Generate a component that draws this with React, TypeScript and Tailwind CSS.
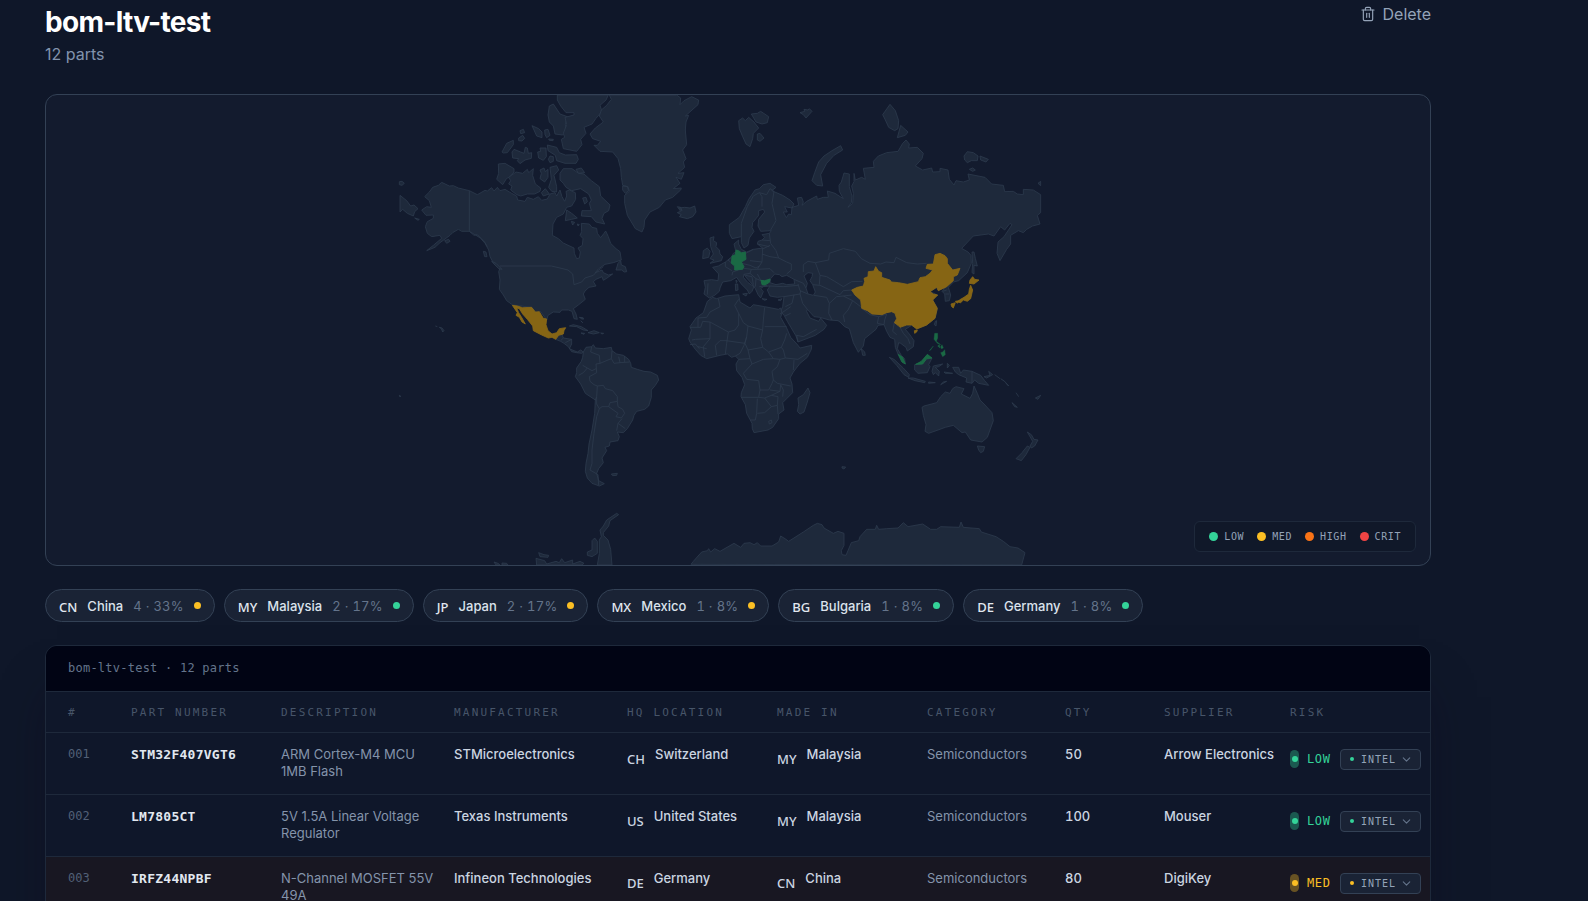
import clsx from "clsx";
import { ChevronDown, Trash2 } from "lucide-react";

type Risk = "LOW" | "MED" | "HIGH" | "CRIT";

interface Country {
  code: string;
  name: string;
  count: number;
  share: number;
  risk: Risk;
}

interface Part {
  id: string;
  partNumber: string;
  description: string;
  manufacturer: string;
  hq: [string, string];
  madeIn: [string, string];
  category: string;
  qty: number;
  supplier: string;
  risk: Risk;
}

const DOT: Record<Risk, string> = {
  LOW: "bg-[#34d399]",
  MED: "bg-[#fbbf24]",
  HIGH: "bg-[#f97316]",
  CRIT: "bg-[#ef4444]",
};

const HALO: Record<Risk, string> = {
  LOW: "bg-[#34d399]/35",
  MED: "bg-[#fbbf24]/35",
  HIGH: "bg-[#f97316]/35",
  CRIT: "bg-[#ef4444]/35",
};

const RISK_TEXT: Record<Risk, string> = {
  LOW: "text-[#34d399]",
  MED: "text-[#fbbf24]",
  HIGH: "text-[#f97316]",
  CRIT: "text-[#ef4444]",
};

const LEVELS: Risk[] = ["LOW", "MED", "HIGH", "CRIT"];

const COUNTRIES: Country[] = [
  { code: "CN", name: "China", count: 4, share: 33, risk: "MED" },
  { code: "MY", name: "Malaysia", count: 2, share: 17, risk: "LOW" },
  { code: "JP", name: "Japan", count: 2, share: 17, risk: "MED" },
  { code: "MX", name: "Mexico", count: 1, share: 8, risk: "MED" },
  { code: "BG", name: "Bulgaria", count: 1, share: 8, risk: "LOW" },
  { code: "DE", name: "Germany", count: 1, share: 8, risk: "LOW" },
];

const PARTS: Part[] = [
  {
    id: "001",
    partNumber: "STM32F407VGT6",
    description: "ARM Cortex-M4 MCU 1MB Flash",
    manufacturer: "STMicroelectronics",
    hq: ["CH", "Switzerland"],
    madeIn: ["MY", "Malaysia"],
    category: "Semiconductors",
    qty: 50,
    supplier: "Arrow Electronics",
    risk: "LOW",
  },
  {
    id: "002",
    partNumber: "LM7805CT",
    description: "5V 1.5A Linear Voltage Regulator",
    manufacturer: "Texas Instruments",
    hq: ["US", "United States"],
    madeIn: ["MY", "Malaysia"],
    category: "Semiconductors",
    qty: 100,
    supplier: "Mouser",
    risk: "LOW",
  },
  {
    id: "003",
    partNumber: "IRFZ44NPBF",
    description: "N-Channel MOSFET 55V 49A",
    manufacturer: "Infineon Technologies",
    hq: ["DE", "Germany"],
    madeIn: ["CN", "China"],
    category: "Semiconductors",
    qty: 80,
    supplier: "DigiKey",
    risk: "MED",
  },
];

const COLUMNS = [
  { label: "#", width: "w-[85px]" },
  { label: "Part number", width: "w-[150px]" },
  { label: "Description", width: "w-[173px]" },
  { label: "Manufacturer", width: "w-[173px]" },
  { label: "HQ location", width: "w-[150px]" },
  { label: "Made in", width: "w-[150px]" },
  { label: "Category", width: "w-[138px]" },
  { label: "Qty", width: "w-[99px]" },
  { label: "Supplier", width: "w-[126px]" },
  { label: "Risk", width: "" },
];

// Map shapes, grouped by region so each group keeps its own origin.
const NORTH_AMERICA = [
  // mainland
  "M104 320L118 306L128 292L145 286L155 277L178 288L190 287L205 294L238 302L262 314L285 301L292 303L305 293L312 303L322 292L330 302L345 298L365 310L380 318L383 330L405 334L412 322L430 328L445 320L455 331L472 327L480 312L495 308L500 318L510 300L516 320L524 334L530 318L528 304L538 300L556 308L557 328L545 348L530 352L520 372L500 382L489 402L487 436L505 446L520 459L552 474L553 490L560 506L568 504L571 486L564 474L577 466L579 446L570 436L575 425L574 400L598 402L606 412L620 415L622 430L632 443L642 430L647 423L655 440L662 460L678 476L690 485L694 510L670 518L645 523L625 537L616 548L636 540L640 548L655 555L668 552L650 565L640 571L636 560L618 568L610 575L618 588L597 592L585 603L580 612L586 628L565 645L550 656L558 672L562 688L552 686L546 664L535 660L515 660L510 667L490 666L474 676L470 690L452 665L438 668L425 652L368 645L350 632L340 615L328 598L330 570L326 545L330 535L312 522L300 500L296 480L285 460L272 445L258 436L238 424L215 424L205 418L188 428L180 436L150 458L135 472L110 482L130 466L155 445L150 436L125 440L112 430L106 410L112 395L130 385L130 375L108 376L95 360L110 350L124 352L118 332Z",
  // aleutians, hawaii, vancouver
  "M30 316L50 332L62 348L72 345L84 356L74 365L70 378L52 370L38 358L30 366Z",
  "M28 275L36 274L43 280L36 286L28 284Z",
  "M74 384L88 388L84 391Z",
  "M164 452L176 448L180 454L170 460Z",
  "M280 484L288 486L291 500L284 500Z",
  "M305 514L318 520L336 538L326 536Z",
  "M136 708L142 710M148 712L156 714L162 722L158 726L154 716Z",
  // newfoundland, anticosti
  "M678 540L684 520L692 512L694 525L706 530L710 545L703 546L695 540Z",
  // canadian arctic
  "M325 222L345 220L372 236L372 246L358 262L350 265L338 284L320 268L326 250Z",
  "M356 262L378 246L398 250L412 238L416 248L430 236L428 256L436 282L452 294L450 304L434 312L412 312L392 318L380 314L362 300L366 288L356 282L362 272Z",
  "M336 186L350 160L370 151L370 164L352 188L340 189Z",
  "M366 186L372 178L392 186L402 190L406 172L412 174L415 190L425 188L424 205L405 210L390 221L382 212L386 206L368 204Z",
  "M390 122L400 118L404 128L392 131Z",
  "M386 144L398 136L404 145L396 153L386 152Z",
  "M426 107L446 116L456 126L456 143L440 138Z",
  "M464 120L474 118L480 136L470 143L465 134Z",
  "M476 147L490 148L489 152L478 151Z",
  "M443 186L452 184L450 174L468 174L469 200L460 211L446 204Z",
  "M475 208L480 198L490 200L490 214L480 218Z",
  "M472 165L500 172L508 188L526 195L560 194L565 208L558 220L525 220L500 212L496 196L474 182Z",
  "M450 240L462 234L466 245L474 238L474 262L464 276L450 266L454 250Z",
  "M480 232L500 227L506 240L492 256L500 290L500 306L485 304L476 292L484 268Z",
  "M454 308L466 296L478 312L460 318Z",
  "M478 48L490 42L502 60L510 72L532 80L526 104L530 122L518 135L495 132L490 108L478 96L474 75Z",
  "M502 15L502 30L512 48L528 68L552 68L552 75L525 82L530 104L520 130L524 142L514 148L520 176L560 184L576 164L572 148L588 130L582 112L606 102L618 85L636 64L630 46L648 30L655 15Z",
  "M510 250L520 236L546 236L566 250L582 252L604 272L628 290L632 318L660 345L656 362L642 370L636 385L644 402L618 396L604 380L574 378L576 362L604 362L598 340L604 330L596 312L572 296L545 302L528 292L520 280L510 270Z",
  "M558 238L574 234L584 248L566 250Z",
  "M578 324L588 322L592 335L584 342Z",
  "M530 360L545 370L562 384L545 388L526 392Z",
  "M544 394L554 397L548 405ZM562 402L568 404L564 408Z",
  // greenland
  "M658 15L664 28L650 46L634 60L628 78L640 96L616 114L600 132L608 146L632 154L622 166L612 166L630 184L668 186L684 206L692 236L694 262L698 286L714 290L718 304L704 316L704 340L712 376L724 396L736 416L756 426L762 412L764 390L780 366L808 352L826 330L848 322L872 300L874 294L850 296L870 280L858 262L874 268L882 248L864 250L884 232L880 216L888 206L878 180L890 164L886 120L888 96L896 76L886 78L924 44L926 30L905 20L882 32L870 44L872 24L860 15Z",
  "M698 288L712 290L716 302L706 310L698 300Z",
  // iceland
  "M862 350L872 352L876 362L868 354L884 352L900 354L914 348L918 366L908 380L892 386L868 380L874 374L862 368L872 364Z",
  // bahamas
  "M568 682L580 684L580 688ZM574 694L578 698",
];

const SOUTH_AMERICA = [
  "M497 118L510 98L516 104L520 114L545 118L545 132L538 146L552 152L562 156L572 150L580 156L575 160L560 158L545 155L535 140L522 130L512 124Z",
  "M580 156L588 142L605 140L610 134L616 144L640 146L664 142L666 152L680 162L700 166L716 178L722 190L724 202L742 208L762 214L782 216L802 226L806 240L796 256L784 270L784 292L776 318L764 328L740 334L732 346L728 360L712 386L700 398L682 396L688 410L684 422L660 426L658 438L645 442L650 452L636 474L640 488L626 506L620 520L626 542L643 551L628 558L606 550L592 534L586 514L588 490L594 460L597 432L606 390L614 340L616 300L586 280L572 252L556 230L560 218L560 204L574 184L578 172Z",
  "M538 78L550 74L574 80L594 92L580 90L560 80Z",
  "M594 98L612 92L628 98L610 102ZM573 99L584 100L582 103ZM632 99L641 100L636 102Z",
  "M570 52L580 54L576 58ZM572 62L578 68",
  "M664 522L682 520L680 526L668 527Z",
  "M28 286L32 288L30 291Z",
  // antarctic peninsula
  "M622 795L628 760L628 720L634 710L630 690L640 678L650 660L680 640L686 644L660 662L656 678L640 698L640 706L654 720L662 748L666 795Z",
  "M592 756L606 750L606 722L614 714L622 724L622 760L606 770L592 766Z",
  "M438 775L464 782L470 792L498 784L508 788L515 776L524 788L548 780L548 792L570 784L582 790L576 795L440 795Z",
  "M446 758L462 764L476 766L474 772L450 770ZM312 786L324 790L330 795L318 795ZM336 789L350 790L354 795L336 795Z",
];

const EURASIA = [
  // mainland
  "M255 300L268 296L280 284L300 280L318 292L305 302L338 316L360 330L372 342L366 354L344 350L352 366L340 366L349 383L356 372L364 374L366 352L386 346L382 324L395 322L400 336L396 346L410 334L440 318L442 328L460 322L475 322L472 303L495 310L520 326L508 304L507 286L514 276L522 249L538 252L538 290L546 318L544 338L534 352L548 340L550 310L545 288L552 275L552 250L556 270L575 262L586 268L580 235L612 232L610 214L625 198L650 188L684 184L698 160L708 150L718 162L716 174L742 172L760 190L756 206L736 228L758 240L785 234L788 246L810 245L810 235L834 240L838 268L852 285L858 272L880 276L898 270L894 252L945 262L965 282L1000 286L1004 305L1030 304L1042 312L1060 314L1060 298L1090 300L1112 314L1112 368L1102 376L1110 402L1088 408L1070 418L1060 428L1045 422L1022 436L1022 462L1010 478L990 512L981 490L984 456L1002 440L1026 404L1020 400L1004 420L992 410L972 438L955 432L910 438L875 475L894 486L903 496L904 520L892 548L866 572L850 576L835 592L842 615L838 632L826 634L824 612L816 604L828 590L805 602L800 592L780 605L803 615L788 630L802 655L795 685L770 705L742 716L725 706L706 718L718 732L732 752L730 770L712 783L708 772L692 760L686 758L682 776L694 796L704 806L706 822L696 816L685 795L676 772L674 748L660 742L650 724L642 704L624 706L618 718L584 746L580 768L565 787L550 758L538 716L524 710L510 696L504 692L478 690L450 682L432 680L412 658L410 664L420 684L446 694L452 684L470 706L462 718L436 736L384 756L378 738L352 694L340 672L330 668L338 650L342 620L322 622L300 618L292 600L300 588L280 590L272 596L280 605L272 624L264 614L256 596L248 584L230 564L222 553L220 562L234 578L252 590L246 604L238 612L232 600L214 582L200 562L182 572L158 576L150 594L148 604L134 616L118 624L102 612L106 592L102 572L125 569L144 572L146 552L128 532L145 528L166 516L184 502L190 490L198 486L192 462L206 450L206 462L214 478L230 486L250 478L278 474L262 462L264 454L276 450L284 442L276 434L298 430L304 422L272 424L264 408L266 388L284 366L280 358L266 362L266 376L248 398L246 412L252 424L238 444L234 466L222 474L214 458L214 440L186 446L178 430L178 404L208 382L226 350L236 328Z",
  // british isles
  "M120 444L132 440L130 452L140 458L138 470L148 480L150 492L158 500L154 512L120 520L132 510L120 506L130 492L122 470Z",
  "M100 482L112 474L120 484L116 502L98 506Z",
  // arctic islands
  "M206 92L218 84L226 92L236 82L252 96L266 114L250 130L248 146L240 170L228 162L218 140L208 116Z",
  "M244 72L262 70L272 64L296 80L292 98L276 102L258 96Z",
  "M262 132L270 130L282 144L270 154L262 150Z",
  "M390 68L404 64L402 58L414 60L418 56L426 64L408 84L400 74Z",
  "M426 272L434 248L446 216L462 198L486 182L512 167L518 180L492 196L470 220L452 254L458 288L440 286Z",
  "M638 74L660 43L676 62L686 92L684 116L674 122L656 112L646 90Z",
  "M692 106L714 126L706 136L682 143Z",
  "M882 198L892 185L910 188L924 198L922 212L904 212L892 218L884 210Z",
  "M930 198L955 208L948 216L932 210ZM898 238L908 234L916 240L908 244Z",
  "M1104 280L1112 274L1112 287Z",
  // sakhalin, taiwan, mediterranean islands
  "M906 486L912 486L916 505L922 528L912 526L912 552L906 548L908 520Z",
  "M796 694L800 692L798 708L793 704Z",
  "M196 582L203 582L204 600L197 602ZM198 570L201 574L199 578ZM218 612L232 610L228 618ZM276 626L291 628L284 631ZM324 630L336 626L332 632Z",
];

const SOUTH = [
  // africa
  "M128 202L140 206L165 198L206 194L210 216L240 234L250 224L284 230L325 238L332 234L336 250L332 262L350 294L362 322L384 346L390 354L425 346L424 358L412 382L390 400L370 426L360 444L366 462L368 488L350 506L338 518L342 540L326 552L326 566L308 592L294 600L252 608L247 596L246 580L230 550L226 524L213 500L214 488L224 464L216 442L200 422L198 402L206 388L196 378L185 382L172 372L150 376L110 386L92 376L76 358L60 336L56 326L64 300L60 290L78 264L100 248L112 214Z",
  "M414 474L420 488L412 516L402 546L390 552L382 544L386 524L384 504L400 494Z",
  "M574 356L584 366L586 376L578 376Z",
  // indonesia
  "M658 382L672 388L700 414L718 434L716 442L702 434L680 406Z",
  "M714 444L730 444L766 454L764 458L735 452Z",
  "M734 404L738 403L755 404L770 388L786 384L776 404L780 410L772 428L744 430L734 420Z",
  "M790 408L818 402L806 410L796 412L808 424L806 438L796 428L790 434L786 424Z",
  "M776 456L796 458L776 460ZM812 464L830 454L820 456ZM832 400L838 406L832 414ZM822 426L848 430L826 430Z",
  "M848 412L866 412L872 430L880 420L906 424L932 436L944 452L956 466L926 460L914 450L906 460L888 456L890 444L866 434L856 426Z",
  "M942 440L960 436L956 424L968 434L950 444ZM974 434L990 446M992 446L1004 454L1016 468L1008 460M1038 488L1046 500M1026 518L1042 532L1034 530Z",
  "M1096 504L1112 496L1104 508Z",
  // australia
  "M756 532L762 528L800 518L812 500L826 486L840 490L848 476L858 470L882 476L874 492L900 505L908 490L912 468L922 490L930 510L942 522L966 548L970 572L952 622L936 636L902 630L886 606L876 608L850 586L826 592L804 600L776 610L765 604L768 584L760 556Z",
  "M922 648L944 650L940 664L932 668L926 660Z",
  "M1072 606L1084 614L1092 628L1104 630L1094 648L1084 654L1080 648L1088 634Z",
  "M1072 648L1080 652L1068 674L1054 692L1038 686L1056 668Z",
  "M516 710L527 711L522 717L516 714Z",
  // antarctica
  "M63 1003L70 994L95 966L112 962L116 956L122 966L134 956L150 964L192 940L212 952L222 940L240 938L252 944L262 938L272 948L306 948L326 936L332 918L345 926L356 934L400 906L430 886L442 880L456 884L462 894L490 910L504 904L522 910L522 946L514 962L516 974L528 976L544 938L566 932L570 920L590 898L616 898L620 886L626 898L650 896L684 894L700 878L714 890L758 882L782 898L800 898L812 890L868 892L873 876L880 892L928 896L934 906L978 920L1000 934L1020 950L1044 954L1065 968L1055 1005Z",
];

const SEAS = [
  "M300 578L302 566L314 552L328 554L336 560L350 556L372 568L374 582L350 584L338 580L318 584Z",
  "M402 558L414 548L428 550L426 560L420 572L428 584L436 606L430 616L414 612L408 594L412 580Z",
];

const BORDERS_NA = "M238 302V424M238 424L252 436L262 434L284 456L292 470M330 528H484L510 534L534 540L548 552L552 584L575 576L585 564L610 556L620 545L640 530";

const BORDERS_SA =
  "M605 140L602 156L628 166L630 190L618 192L620 218L598 230L600 244L612 254L622 258L620 290L616 300M630 190L654 180L664 176L666 152M664 176L672 190L690 188L686 170M690 188L718 186M704 168V186M578 196L592 204L606 212L618 206M592 204L580 218L566 226M622 258L640 256L646 266L668 272L682 290L682 304L660 308L656 320L636 320L628 326L620 312L620 290M682 304L684 320L698 328L704 340L694 354L678 350L684 340L656 320M684 370L706 386M684 370L680 392M684 370L696 356M628 326L620 350L612 400L606 450L606 490L600 510L624 524L626 555M520 114L512 122M545 118L526 128";

const BORDERS_EU =
  "M214 440L214 400L232 350L250 318L268 308L276 320L276 350M268 308L290 314L300 296L312 304L306 340L318 392L302 420M298 430L302 460L318 482L326 504L350 516L364 522L364 540L350 552M278 474L276 516L240 512M276 492L300 500L326 504M300 466L276 478M228 490L250 478M262 462L298 470M276 450L300 452M215 520L240 526L258 534L268 528L276 516M222 535L244 538L262 538L268 528M205 540L188 546L186 556M186 542L166 530L166 516M184 502L174 510L186 520M262 538L300 536L312 548M244 538L240 550L222 553M240 550L258 566L273 572M258 566L256 590M262 552L273 572M268 590L292 586M226 556L246 560L250 584M114 580L112 614M400 546L400 524L414 514L436 518L476 510L478 490L520 476L556 484L574 506L600 520L632 522L648 516L672 518L678 502L710 518L742 522L770 520M436 518L450 556L470 560L494 574L520 590L545 575L578 574M428 584L450 586L480 600L510 614L520 602L545 600M450 556L448 584M372 568L400 580L408 594M384 582L390 602L414 612M300 588L340 590L384 586M342 620L390 612L392 602M390 612L398 640L412 658M372 614L366 640L346 650M432 616L470 622L478 640L476 670L486 690M478 640L500 620L520 618L545 615M520 618L548 632L534 660L520 676L524 696M548 632L572 650M575 655L600 674L626 680L650 672M626 680L622 700L642 704M650 672L644 690L642 704M384 756L380 736L400 740L440 718M673 698L668 724L680 734M690 712L700 730L714 746L720 762M818 604L830 600M826 612L838 612";

const BORDERS_AF =
  "M60 292H84L84 264L110 262L120 246L150 230L145 206M84 292H92L98 274L120 276V326L76 328L66 330M120 276L175 306L195 300L206 285L206 250L194 226L206 208M206 250L220 278L234 288L278 300L280 270L284 232M284 290H350M234 288L230 320L222 346L210 370L196 378M175 306L170 340L166 372M230 320L225 340L168 332L150 332L136 346L140 376M120 326L100 350L104 380M225 340L234 360L278 352L272 326L278 300M278 352L296 366L334 352L344 330L350 310M296 366L310 386L330 388L346 384L340 360L334 352M346 384L384 388L412 370M330 388L322 410L306 424L310 450L322 460L362 468M372 390L370 420M206 388L240 386L234 360M240 386L246 402L220 430M246 402L280 388L310 386M220 430L230 448L266 452L270 480L296 480L306 460L310 450M214 502H266L284 504L304 496L330 484M270 480L266 502M262 506L260 550L256 570L240 570M262 550L284 548L304 530L322 526L324 500L304 496M284 504L304 530M296 574L304 570L306 578L298 582ZM300 480L330 484L332 464L340 480L338 500M322 526L324 552M110 356L84 350M60 344L76 342L88 356M330 252L345 242L362 230M345 258L362 250";

const BORDER_PAPUA = "M906 424V460";

interface RegionProps {
  x?: number;
  y?: number;
  shapes: string[];
  borders: string;
}

function Region({ x = 0, y = 0, shapes, borders }: RegionProps) {
  return (
    <g transform={`translate(${x} ${y})`}>
      {shapes.map((d) => (
        <path key={d} d={d} fill="#1e293b" />
      ))}
      <path d={borders} fill="none" />
    </g>
  );
}

function WorldMap() {
  return (
    <svg
      viewBox="-1032 15 4152 1410"
      preserveAspectRatio="xMidYMid slice"
      className="block h-full w-full"
      role="img"
      aria-label="Supply chain risk by country"
      stroke="#2d3b4e"
      strokeWidth="2.4"
      strokeLinejoin="round"
    >
      <Region shapes={NORTH_AMERICA} borders={BORDERS_NA} />
      <Region y={630} shapes={SOUTH_AMERICA} borders={BORDERS_SA} />
      <Region x={840} shapes={EURASIA} borders={BORDERS_EU} />
      <Region x={840} y={420} shapes={SOUTH} borders={BORDERS_AF} />
      <g transform="translate(840 0)">
        {SEAS.map((d) => (
          <path key={d} d={d} fill="#131b2e" />
        ))}
      </g>
      <path d={BORDER_PAPUA} transform="translate(840 420)" fill="none" />

      {/* sourcing countries */}
      <g fill="#866514" stroke="#8b6a18">
        <path
          transform="translate(0 630)"
          d="M367 16L382 18L398 23L425 22L436 36L448 35L460 55L470 57L468 74L474 92L486 102L500 98L508 86L527 83L522 92L520 102L506 106L497 118L486 112L475 114L455 105L430 92L428 78L412 58L398 42L388 26L380 24L386 38L396 54L406 72L396 66L388 52L378 46L382 38Z"
        />
        <path
          transform="translate(840 0)"
          d="M545 600L562 592L580 588L584 574L582 565L594 560L595 545L612 543L617 530L626 544L635 548L635 562L660 570L664 576L686 578L712 583L745 575L750 563L766 560L780 550L788 540L768 535L772 523L790 522L795 494L810 490L825 497L832 506L832 520L848 540L870 535L862 555L850 560L850 572L830 590L805 602L800 592L780 605L790 612L803 615L788 630L802 655L795 685L770 705L740 717L725 705L710 705L690 712L684 706L673 698L680 686L675 670L665 665L650 668L636 674L606 672L592 662L575 655L572 630L555 615ZM733 722L742 720L740 726L734 730Z"
        />
        <path
          transform="translate(840 0)"
          d="M898 580L900 570L908 560L914 568L927 570L912 582ZM902 586L908 600L902 626L892 634L880 630L872 638L862 636L868 630L882 622L896 612L898 598ZM843 642L856 638L850 654L845 650ZM856 634L866 632L862 640Z"
        />
      </g>
      <g fill="#1a6944" stroke="#1c6e48" transform="translate(840 0)">
        <path d="M198 480L206 482L214 488L226 486L228 508L214 516L222 530L218 538L194 540L194 528L184 520L186 498L196 494Z" />
        <path d="M273 571L284 572L300 567L298 577L285 585L276 584Z" />
        <path d="M685 793L698 802L706 822L696 816ZM737 823L754 814L772 793L786 804L770 806L758 822Z" />
        <path
          strokeWidth="1"
          d="M794 730L803 730L803 744L799 754L812 764L802 760L792 748ZM812 788L818 786L824 779L826 794L818 800ZM803 768L808 764L810 774ZM812 770L816 764L820 774L814 776ZM778 782L790 768L782 780Z"
        />
      </g>
    </svg>
  );
}

function Place({ code, name }: { code: string; name: string }) {
  return (
    <span className="flex items-start gap-[10px]">
      <span className="pt-[3px] font-['Noto_Sans',sans-serif] text-[13px] leading-[20px] font-medium">{code}</span>
      <span>{name}</span>
    </span>
  );
}

function RiskCell({ risk }: { risk: Risk }) {
  return (
    <div className="flex items-center pt-[3px] font-['DejaVu_Sans_Mono',monospace]">
      <span className={clsx("flex h-[18px] w-[9px] items-center justify-center rounded-full", HALO[risk])}>
        <span className={clsx("size-[6px] rounded-full", DOT[risk])} />
      </span>
      <span className={clsx("ml-2 w-[33px] text-[12px] leading-[18px] tracking-[0.05em]", RISK_TEXT[risk])}>{risk}</span>
      <button
        type="button"
        className="flex h-[21px] w-[81px] shrink-0 items-center rounded-[4px] border border-[#334155] bg-[#1a2335] pl-[9px] text-[10px] tracking-[0.1em] text-[#94a3b8]"
      >
        <span className={clsx("mr-[7px] size-[4px] rounded-full", DOT[risk])} />
        INTEL
        <ChevronDown className="ml-[4px] size-[13px] text-[#64748b]" strokeWidth={2} />
      </button>
    </div>
  );
}

export default function App() {
  return (
    <div className="h-screen overflow-hidden bg-[#0f1729] font-['Inter',sans-serif] text-[#e2e8f0]">
      <main className="mr-[157px] ml-[45px]">
        <header className="flex items-start justify-between pt-[4px]">
          <div>
            <h1 className="text-[28px] leading-[36px] font-bold tracking-tight text-white">bom-ltv-test</h1>
            <p className="mt-[2px] text-[16px] leading-[24px] text-[#8293ad]">12 parts</p>
          </div>
          <button type="button" className="flex items-center gap-[7px] text-[16px] leading-[20px] text-[#94a3b8]">
            <Trash2 className="size-4" strokeWidth={1.75} />
            Delete
          </button>
        </header>

        <section className="relative mt-[28px] h-[472px] overflow-hidden rounded-xl border border-[#334155] bg-[#131b2e]">
          <WorldMap />
          <ul className="absolute right-[14px] bottom-[13px] flex h-[31px] items-center gap-[13px] rounded-md border border-[#1e293b] bg-[#101829] px-[14px] font-['DejaVu_Sans_Mono',monospace] text-[10px] tracking-[0.06em] text-[#94a3b8]">
            {LEVELS.map((level) => (
              <li key={level} className="flex items-center gap-[6px]">
                <span className={clsx("size-[9px] rounded-full", DOT[level])} />
                {level}
              </li>
            ))}
          </ul>
        </section>

        <ul className="mt-[23px] flex flex-wrap gap-[9px]">
          {COUNTRIES.map((c) => (
            <li
              key={c.code}
              className="flex h-[33px] items-center gap-[10px] rounded-full border border-[#334155] bg-[#1a2335] px-[13px] text-[13px] leading-[20px]"
            >
              <span className="pt-[2px] font-['Noto_Sans',sans-serif] font-medium">{c.code}</span>
              <span className="font-medium text-[#dbe2ec]">{c.name}</span>
              <span className="tracking-[0.02em] text-[#64748b] tabular-nums">
                {c.count} · {c.share}%
              </span>
              <span className={clsx("size-[7px] rounded-full", DOT[c.risk])} />
            </li>
          ))}
        </ul>

        <section className="mt-[23px] overflow-hidden rounded-xl border border-[#1e293b] bg-[#0f172a] shadow-[0_40px_48px_-12px_rgba(16,8,28,0.5)]">
          <h2 className="border-b border-[#1e293b] bg-[#010414] py-[14px] pl-[22px] font-['DejaVu_Sans_Mono',monospace] text-[12px] leading-[17px] tracking-[0.02em] text-[#64748b]">
            bom-ltv-test · 12 parts
          </h2>
          <table className="w-full table-fixed text-left text-[13px] leading-[17px]">
            <thead>
              <tr className="h-[40px] border-b border-[#1e293b] font-['DejaVu_Sans_Mono',monospace] text-[11px] tracking-[0.2em] text-[#475569] uppercase">
                {COLUMNS.map((col) => (
                  <th key={col.label} scope="col" className={clsx("pt-[2px] font-normal whitespace-nowrap first:pl-[22px]", col.width)}>
                    {col.label}
                  </th>
                ))}
              </tr>
            </thead>
            <tbody>
              {PARTS.map((p) => (
                <tr
                  key={p.id}
                  className={clsx(
                    "h-[62px] border-b border-[#1e293b] align-top font-medium text-[#cbd5e1] *:pt-[13px]",
                    p.risk === "MED" && "bg-[#181722]",
                  )}
                >
                  <td className="pl-[22px] font-['DejaVu_Sans_Mono',monospace] text-[12px] font-normal text-[#526077]">{p.id}</td>
                  <td className="font-['DejaVu_Sans_Mono',monospace] font-bold tracking-[0.02em] text-[#e2e8f0]">{p.partNumber}</td>
                  <td className="pr-[10px] font-normal text-[#8494ab]">{p.description}</td>
                  <td>{p.manufacturer}</td>
                  <td>
                    <Place code={p.hq[0]} name={p.hq[1]} />
                  </td>
                  <td>
                    <Place code={p.madeIn[0]} name={p.madeIn[1]} />
                  </td>
                  <td className="font-normal text-[#8494ab]">{p.category}</td>
                  <td className="tabular-nums">{p.qty}</td>
                  <td className="whitespace-nowrap">{p.supplier}</td>
                  <td>
                    <RiskCell risk={p.risk} />
                  </td>
                </tr>
              ))}
            </tbody>
          </table>
        </section>
      </main>
    </div>
  );
}
